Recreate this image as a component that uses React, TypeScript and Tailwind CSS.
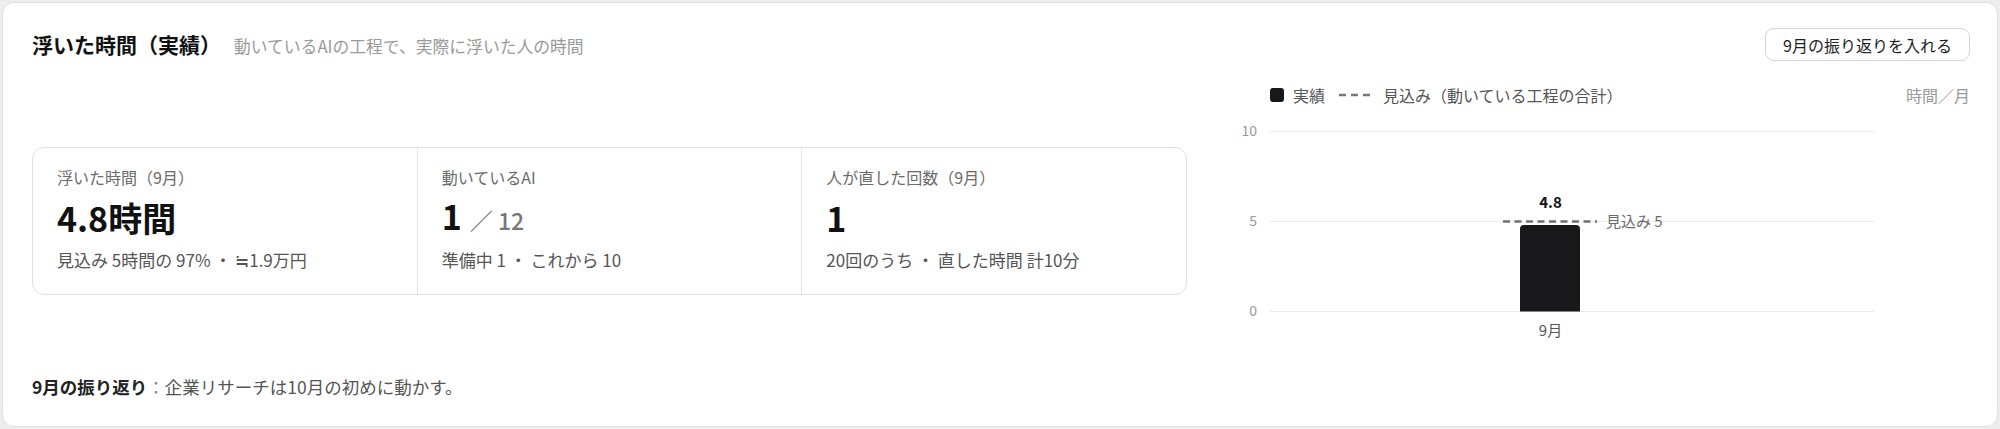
import React from "react";

const FONT = { fontFamily: '"Noto Sans CJK JP", "Noto Sans", sans-serif' };

function Kpi({
  label,
  main,
  sub,
  border,
}: {
  label: string;
  main: React.ReactNode;
  sub: string;
  border?: boolean;
}) {
  return (
    <div className={`flex-1 px-6 pt-[18px] pb-[23px] ${border ? "border-l border-[#e5e5e5]" : ""}`}>
      <div className="text-[16px] leading-[22px] text-[#6b6b6b]">{label}</div>
      <div className="mt-[10px] h-[40px] flex items-center">{main}</div>
      <div className="mt-[11px] text-[17px] leading-[22px] text-[#555555] whitespace-pre">{sub}</div>
    </div>
  );
}

function Chart() {
  const gx0 = 30;
  const gx1 = 634;
  const y10 = 16.5;
  const y5 = 106.5;
  const y0 = 196.5;
  const barTop = y0 - 4.8 * 18;
  return (
    <svg width="730" height="230" viewBox="0 0 730 230" style={FONT}>
      {[
        [y10, "10"],
        [y5, "5"],
        [y0, "0"],
      ].map(([y, t]) => (
        <g key={t as string}>
          <line x1={gx0} x2={gx1} y1={y as number} y2={y as number} stroke="#ececec" strokeWidth="1" />
          <text x="17" y={(y as number) + 1} textAnchor="end" dominantBaseline="middle" fontSize="14" fill="#9a9a9a">
            {t}
          </text>
        </g>
      ))}
      <path
        d={`M280 ${y0} L280 ${barTop + 4} Q280 ${barTop} 284 ${barTop} L336 ${barTop} Q340 ${barTop} 340 ${barTop + 4} L340 ${y0} Z`}
        fill="#18181b"
      />
      <line x1="263" x2="357" y1={y5} y2={y5} stroke="#707070" strokeWidth="2.5" strokeDasharray="7 4.5" />
      <text x="366" y={y5 + 1} dominantBaseline="middle" fontSize="15" fill="#6b6b6b">
        見込み 5
      </text>
      <text x="310.5" y="88.5" textAnchor="middle" dominantBaseline="middle" fontSize="15" fontWeight="700" fill="#111111">
        4.8
      </text>
      <text x="310.5" y="217" textAnchor="middle" dominantBaseline="middle" fontSize="15" fill="#555555">
        9月
      </text>
    </svg>
  );
}

export default function App() {
  return (
    <div className="w-[2000px] h-[429px] bg-[#ededed] p-[2px]" style={FONT}>
      <div className="h-full bg-white border border-[#e2e2e2] rounded-[12px] pl-[29px] pr-[27px] pt-[25px] flex flex-col">
        <div className="flex items-center justify-between h-[33px]">
          <div className="flex items-baseline gap-[13px]">
            <h1 className="text-[21px] font-bold text-[#111111] leading-[28px]">浮いた時間（実績）</h1>
            <span className="text-[16.8px] text-[#9a9a9a]">動いているAIの工程で、実際に浮いた人の時間</span>
          </div>
          <button className="h-[33px] w-[205px] rounded-[9px] border border-[#d4d4d4] bg-white text-[16px] text-[#1f1f1f] flex items-center justify-center">
            9月の振り返りを入れる
          </button>
        </div>

        <div className="flex justify-between">
          <div className="w-[1155px] pt-[86px]">
            <div className="flex rounded-[12px] border border-[#e2e2e2] h-[148px]">
              <Kpi
                label="浮いた時間（9月）"
                main={<span className="text-[34px] font-bold text-[#111111] leading-[40px]">4.8時間</span>}
                sub="見込み 5時間の 97% ・ ≒1.9万円"
              />
              <Kpi
                border
                label="動いているAI"
                main={
                  <span className="flex items-baseline leading-[40px]">
                    <span className="text-[34px] font-bold text-[#111111]">1</span>
                    <span className="ml-[8px] text-[23px] text-[#777777] font-medium">／ 12</span>
                  </span>
                }
                sub="準備中 1 ・ これから 10"
              />
              <Kpi
                border
                label="人が直した回数（9月）"
                main={<span className="text-[34px] font-bold text-[#111111] leading-[40px]">1</span>}
                sub="20回のうち ・ 直した時間 計10分"
              />
            </div>
          </div>

          <div className="w-[730px] pt-[23px]">
            <div className="flex items-center justify-between h-[22px] pl-[30px]">
              <div className="flex items-center text-[16px] text-[#555555]">
                <span className="w-[14px] h-[14px] rounded-[3px] bg-[#18181b]" />
                <span className="ml-[9px]">実績</span>
                <svg width="34" height="4" className="ml-[14px]">
                  <line x1="0" x2="34" y1="2" y2="2" stroke="#777777" strokeWidth="2.5" strokeDasharray="7 5" />
                </svg>
                <span className="ml-[10px]">見込み（動いている工程の合計）</span>
              </div>
              <span className="text-[16px] text-[#9a9a9a]">時間／月</span>
            </div>
            <div className="mt-[9px]">
              <Chart />
            </div>
          </div>
        </div>

        <div className="mt-[30px] text-[17.5px] leading-[24px] text-[#555555]">
          <span className="font-bold text-[#222222]">9月の振り返り</span>
          <span className="text-[#888888]">：</span>
          企業リサーチは10月の初めに動かす。
        </div>
      </div>
    </div>
  );
}
